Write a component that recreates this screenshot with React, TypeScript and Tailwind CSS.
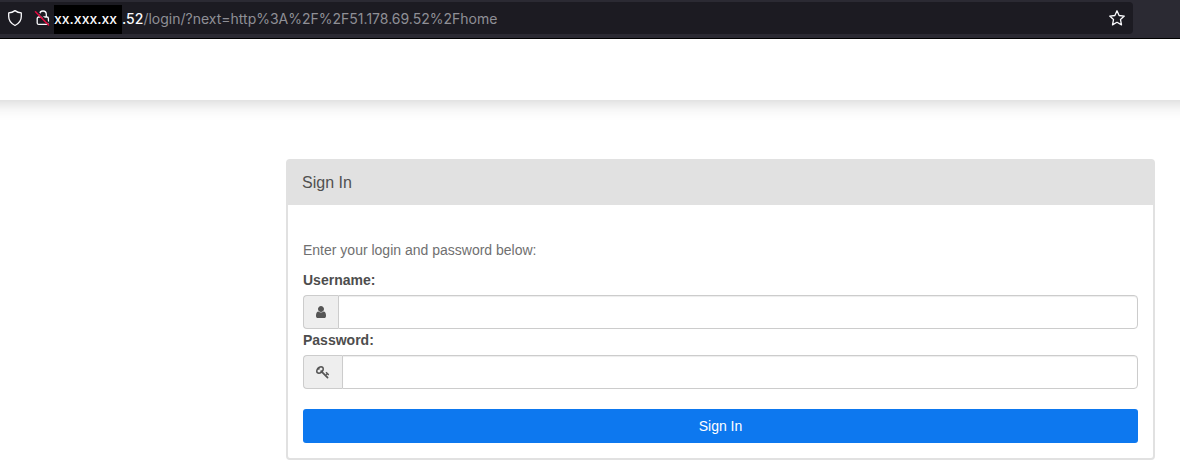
import React from "react";

function ShieldIcon() {
  return (
    <svg width="18" height="18" viewBox="0 0 18 18" fill="none" stroke="#fbfbfe" strokeWidth="1.3" strokeLinejoin="round" aria-hidden="true">
      <path d="M9 1.600c1.800 1.300 3.800 2.100 6.300 2.300v3.700c0 3.900-2.300 7-6.300 8.900C5 14.600 2.700 11.500 2.700 7.600V3.900C5.200 3.700 7.200 2.900 9 1.600z" />
    </svg>
  );
}

function InsecureLockIcon() {
  return (
    <svg width="18" height="18" viewBox="0 0 18 18" fill="none" stroke="#fbfbfe" strokeWidth="1.3" strokeLinejoin="round" aria-hidden="true">
      <path d="M5.700 8V5.300a3.300 3.300 0 0 1 6.600 0V8" />
      <rect x="3.200" y="8" width="11.200" height="7.400" rx="1.500" />
      <path d="M2.500 1.700 15.700 14.700" stroke="#1c1b22" strokeWidth="1.400" />
      <path d="M1.500 2.800 14.500 16" stroke="#e2093f" strokeWidth="1.600" strokeLinecap="round" />
    </svg>
  );
}

function StarIcon() {
  return (
    <svg width="18" height="18" viewBox="0 0 18 18" fill="none" stroke="#fbfbfe" strokeWidth="1.300" strokeLinejoin="round" aria-hidden="true">
      <path d="M9 1.800l2.100 4.700 5.200.6-3.800 3.500 1 5.300L9 13.300l-4.500 2.600 1-5.300L1.700 7.100l5.200-.6z" />
    </svg>
  );
}

function UserIcon() {
  return (
    <svg width="14" height="14" viewBox="0 0 1792 1792" fill="#555" aria-hidden="true">
      <path d="M1536 1399q0 109-62.500 187t-150.500 78h-854q-88 0-150.500-78t-62.500-187q0-85 8.500-160.500t31.500-152 58.500-131 94-89 134.500-34.500q131 128 313 128t313-128q76 0 134.500 34.500t94 89 58.500 131 31.500 152 8.500 160.500zm-256-887q0 159-112.500 271.500t-271.500 112.500-271.500-112.500-112.500-271.500 112.500-271.500 271.500-112.500 271.500 112.500 112.500 271.500z" />
    </svg>
  );
}

function KeyIcon() {
  return (
    <svg width="14" height="14" viewBox="0 0 1792 1792" fill="#555" aria-hidden="true">
      <path d="M832 512q0-80-56-136t-136-56-136 56-56 136q0 42 19 83-41-19-83-19-80 0-136 56t-56 136 56 136 136 56 136-56 56-136q0-42-19-83 41 19 83 19 80 0 136-56t56-136zm851 704q0 17-49 66t-66 49q-9 0-28.500-16t-36.500-33-38.500-40-24.500-26l-96 96 220 220q28 28 28 68 0 42-39 81t-81 39q-40 0-68-28l-671-671q-176 131-365 131-163 0-265.500-102.500t-102.500-265.500q0-160 95-313t248-248 313-95q163 0 265.500 102.500t102.500 265.500q0 189-131 365l355 355 96-96q-3-3-26-24.500t-40-38.500-33-36.500-16-28.500q0-17 49-66t66-49q13 0 23 10 6 6 46 44.500t82 79.500 86.500 86 73 78 28.500 41z" />
    </svg>
  );
}

function AddressBar() {
  return (
    <div className="border-b border-black bg-[#2b2a33] pt-0.5 pr-[47px] pb-1">
      <div className="flex h-8 items-center rounded-r bg-[#1c1b22] pr-[7px] pl-1.5 font-[Inter,sans-serif] text-[14px]">
        <ShieldIcon />
        <span className="ml-2.5 flex">
          <InsecureLockIcon />
        </span>
        <span className="ml-0.5 flex h-[29px] w-[68px] items-center self-end bg-black pb-0.5 font-medium whitespace-nowrap text-[#fbfbfe]">
          xx.xxx.xx
        </span>
        <span className="min-w-0 flex-1 truncate pt-0.5 text-[#8f8f96]">
          <span className="font-medium text-[#fbfbfe]">.52</span>
          /login/?next=http%3A%2F%2F51.178.69.52%2Fhome
        </span>
        <button type="button" aria-label="Bookmark this page">
          <StarIcon />
        </button>
      </div>
    </div>
  );
}

type FieldProps = {
  id: string;
  label: string;
  type: string;
  addonClass: string;
  icon: React.ReactNode;
};

function Field({ id, label, type, addonClass, icon }: FieldProps) {
  return (
    <div>
      <label htmlFor={id} className="block pb-[5px] font-bold text-[#4d4d4d]">
        {label}
      </label>
      <div className="flex h-[34px]">
        <span className={`flex items-center justify-center rounded-l border border-r-0 border-[#ccc] bg-[#eee] ${addonClass}`}>
          {icon}
        </span>
        <input
          id={id}
          name={id}
          type={type}
          className="min-w-0 flex-1 rounded-r border border-[#ccc] bg-white px-3 shadow-[inset_0_1px_1px_rgba(0,0,0,0.075)] outline-none focus:border-[#0d78ef]"
        />
      </div>
    </div>
  );
}

export default function App() {
  return (
    <div className="bg-white font-['Liberation_Sans',Arial,sans-serif] text-[14px] leading-5">
      <AddressBar />
      <header className="h-[61px] [clip-path:inset(0_0_-40px_0)]">
        <div className="-mx-10 h-full bg-white shadow-[0_0_20px_rgba(0,0,0,0.23)]" />
      </header>
      <main className="pt-[59px] pr-[25px] pb-4 pl-[286px]">
        <section className="rounded border-2 border-[#e1e1e1] bg-white">
          <h1 className="bg-[#e1e1e1] px-3.5 py-3 text-[16px] leading-5 text-[#505050]">Sign In</h1>
          <form className="px-[15px] pt-[35px] pb-[15px]" onSubmit={(event) => event.preventDefault()}>
            <p className="mb-2.5 text-[#707070]">Enter your login and password below:</p>
            <div className="grid gap-px">
              <Field id="username" label="Username:" type="text" addonClass="w-[35px]" icon={<UserIcon />} />
              <Field id="password" label="Password:" type="password" addonClass="w-[39px]" icon={<KeyIcon />} />
            </div>
            <button type="submit" className="mt-5 h-[34px] w-full rounded-[3px] bg-[#0d78ef] text-white">
              Sign In
            </button>
          </form>
        </section>
      </main>
    </div>
  );
}
